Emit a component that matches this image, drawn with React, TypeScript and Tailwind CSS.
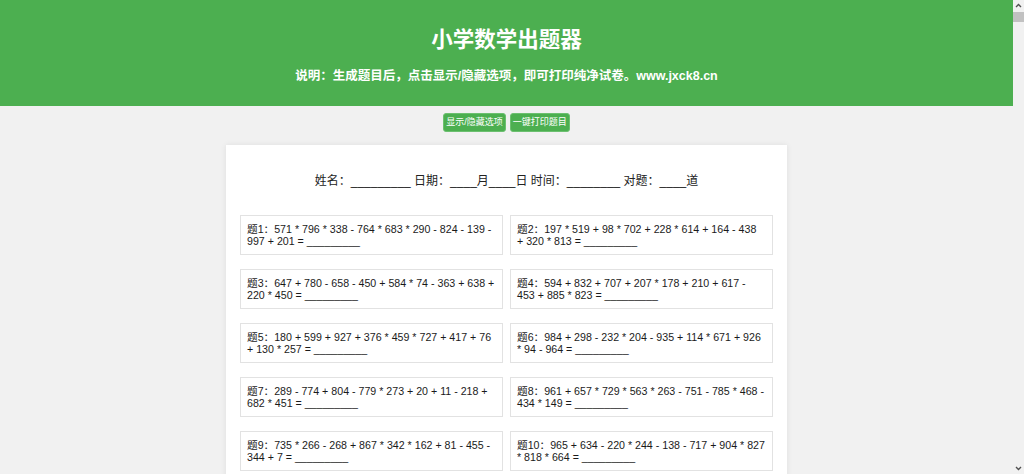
const problems: string[] = [
  "571 * 796 * 338 - 764 * 683 * 290 - 824 - 139 - 997 + 201",
  "197 * 519 + 98 * 702 + 228 * 614 + 164 - 438 + 320 * 813",
  "647 + 780 - 658 - 450 + 584 * 74 - 363 + 638 + 220 * 450",
  "594 + 832 + 707 + 207 * 178 + 210 + 617 - 453 + 885 * 823",
  "180 + 599 + 927 + 376 * 459 * 727 + 417 + 76 + 130 * 257",
  "984 + 298 - 232 * 204 - 935 + 114 * 671 + 926 * 94 - 964",
  "289 - 774 + 804 - 779 * 273 + 20 + 11 - 218 + 682 * 451",
  "961 + 657 * 729 * 563 * 263 - 751 - 785 * 468 - 434 * 149",
  "735 * 266 - 268 + 867 * 342 * 162 + 81 - 455 - 344 + 7",
  "965 + 634 - 220 * 244 - 138 - 717 + 904 * 827 * 818 * 664",
  "412 + 538 * 67 - 290 + 845 - 133 * 721 + 306 - 58 + 940",
  "273 * 619 - 804 + 152 + 477 * 39 - 611 + 208 * 735 - 94",
  "856 - 321 + 740 * 118 + 65 - 932 * 407 + 589 + 213 - 370",
  "129 + 684 * 253 - 497 + 308 * 76 - 845 + 912 - 431 * 28",
  "703 * 415 + 266 - 189 * 954 + 37 - 620 + 481 * 352 + 99",
  "348 + 527 - 816 * 63 + 290 + 745 * 131 - 604 - 82 * 519",
  "591 - 236 * 478 + 903 + 17 * 662 - 345 + 780 - 128 + 455",
  "867 * 92 + 314 - 705 + 436 * 281 - 59 + 623 * 170 - 948",
  "45 + 778 * 309 - 612 + 254 - 893 * 146 + 371 + 520 * 67",
  "632 - 185 + 947 * 224 - 308 + 76 * 851 - 469 + 193 * 580",
];

function Scrollbar() {
  return (
    <div className="flex h-full w-[11px] shrink-0 flex-col items-stretch bg-[#f1f1f1]">
      <div className="flex h-[11px] items-center justify-center">
        <svg width="7" height="5" viewBox="0 0 7 5" fill="none">
          <path d="M1 4 L3.5 1.5 L6 4" stroke="#505050" strokeWidth="1.4" />
        </svg>
      </div>
      <div className="mt-[1px] h-[10px] bg-[#c1c1c1]" />
      <div className="flex-1" />
      <div className="flex h-[11px] items-center justify-center">
        <svg width="7" height="5" viewBox="0 0 7 5" fill="none">
          <path d="M1 1 L3.5 3.5 L6 1" stroke="#505050" strokeWidth="1.4" />
        </svg>
      </div>
    </div>
  );
}

export default function App() {
  return (
    <div
      className="flex h-screen overflow-hidden bg-[#f1f1f1] text-[#222]"
      style={{ fontFamily: '"Liberation Sans", "Noto Sans CJK SC", Arial, sans-serif' }}
    >
      <div className="min-w-0 flex-1 overflow-hidden pb-10">
        <header className="flex h-[106px] flex-col items-center bg-[#4CAF50] pt-[25px] text-white">
          <h1 className="text-[21.5px] font-bold leading-[30px]">小学数学出题器</h1>
          <p className="mt-[11px] text-[12.5px] font-bold leading-[20px]">
            说明：生成题目后，点击显示/隐藏选项，即可打印纯净试卷。www.jxck8.cn
          </p>
        </header>

        <div className="mt-[7px] flex justify-center gap-[4px]">
          <button className="h-[19px] rounded-[3px] border border-[#6cc070] bg-[#4CAF50] px-[2px] text-[9px] leading-[17px] text-white">
            显示/隐藏选项
          </button>
          <button className="h-[19px] rounded-[3px] border border-[#6cc070] bg-[#4CAF50] px-[2px] text-[9px] leading-[17px] text-white">
            一键打印题目
          </button>
        </div>

        <main className="mx-auto mt-[13px] w-[561px] bg-white px-[14px] pb-[20px] pt-[26px] shadow-[0_0_6px_rgba(0,0,0,0.08)]">
          <div className="mb-[24px] text-center text-[12px] leading-[20px] text-[#222]">
            姓名：_________ 日期：____月____日 时间：________ 对题：____道
          </div>
          <div className="grid grid-cols-2 gap-x-[7px] gap-y-[14px]">
            {problems.map((p, i) => (
              <div
                key={i}
                className="border border-[#e2e2e2] py-[6.5px] pl-[6px] pr-[7px] text-[10.65px] leading-[12.5px] text-[#1a1a1a]"
              >
                题{i + 1}：{p} = _________
              </div>
            ))}
          </div>
        </main>
      </div>
      <Scrollbar />
    </div>
  );
}
